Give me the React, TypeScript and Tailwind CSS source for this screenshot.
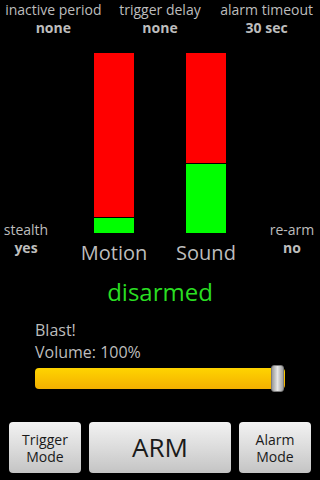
import React from "react";

const font = { fontFamily: '"Open Sans", "Noto Sans", sans-serif' };

const Setting = ({ label, value }: { label: string; value: string }) => (
  <div className="flex flex-col items-center">
    <span className="text-[14px] leading-[18px] text-[#bdbdbd]">{label}</span>
    <span className="text-[14px] leading-[18px] font-bold text-[#bdbdbd]">{value}</span>
  </div>
);

const Meter = ({ label, green }: { label: string; green: number }) => (
  <div className="flex flex-col items-center w-[80px]">
    <div className="flex flex-col w-[40px] h-[180px]">
      <div className="flex-1 bg-[#ff0000]" />
      <div className="h-[1px] bg-black" />
      <div className="bg-[#00ff00]" style={{ height: green }} />
    </div>
    <span className="mt-[8px] text-[20px] leading-[24px] text-[#bdbdbd]">{label}</span>
  </div>
);

const ModeButton = ({ children, className }: { children: React.ReactNode; className: string }) => (
  <button
    className={`h-[51px] rounded-[4px] bg-gradient-to-b from-[#f2f2f2] via-[#dcdcdc] to-[#c4c4c4] text-[#1a1a1a] flex items-center justify-center text-center ${className}`}
  >
    {children}
  </button>
);

export default function App() {
  return (
    <div className="w-[320px] h-[480px] bg-black flex flex-col overflow-hidden" style={font}>
      <div className="grid grid-cols-3 pt-[1px]">
        <Setting label="inactive period" value="none" />
        <Setting label="trigger delay" value="none" />
        <Setting label="alarm timeout" value="30 sec" />
      </div>

      <div className="flex items-end mt-[16px]">
        <div className="w-[52px] pb-[8px]">
          <Setting label="stealth" value="yes" />
        </div>
        <div className="ml-[22px]">
          <Meter label="Motion" green={15} />
        </div>
        <div className="ml-[12px]">
          <Meter label="Sound" green={69} />
        </div>
        <div className="ml-auto w-[56px] pb-[8px]">
          <Setting label="re-arm" value="no" />
        </div>
      </div>

      <div className="mt-[12px] text-center text-[24px] leading-[30px] text-[#2ade22]">disarmed</div>

      <div className="px-[35px] mt-[12px] text-[#bdbdbd] text-[16px] leading-[22px]">
        <div>Blast!</div>
        <div>Volume: 100%</div>
        <div className="relative h-[27px] mt-[2px] flex items-center">
          <div className="w-full h-[21px] rounded-[4px] bg-gradient-to-b from-[#ffd400] to-[#f3b000]" />
          <div className="absolute right-[1px] top-0 w-[13px] h-[27px] rounded-[3px] border border-[#7a7a7a] bg-gradient-to-r from-[#9a9a9a] via-[#e6e6e6] to-[#a0a0a0]" />
        </div>
      </div>

      <div className="mt-auto mb-[7px] px-[9px] flex gap-[8px]">
        <ModeButton className="w-[72px] text-[14px] leading-[17px]">
          Trigger
          <br />
          Mode
        </ModeButton>
        <ModeButton className="flex-1 text-[26px]">ARM</ModeButton>
        <ModeButton className="w-[72px] text-[14px] leading-[17px]">
          Alarm
          <br />
          Mode
        </ModeButton>
      </div>
    </div>
  );
}
